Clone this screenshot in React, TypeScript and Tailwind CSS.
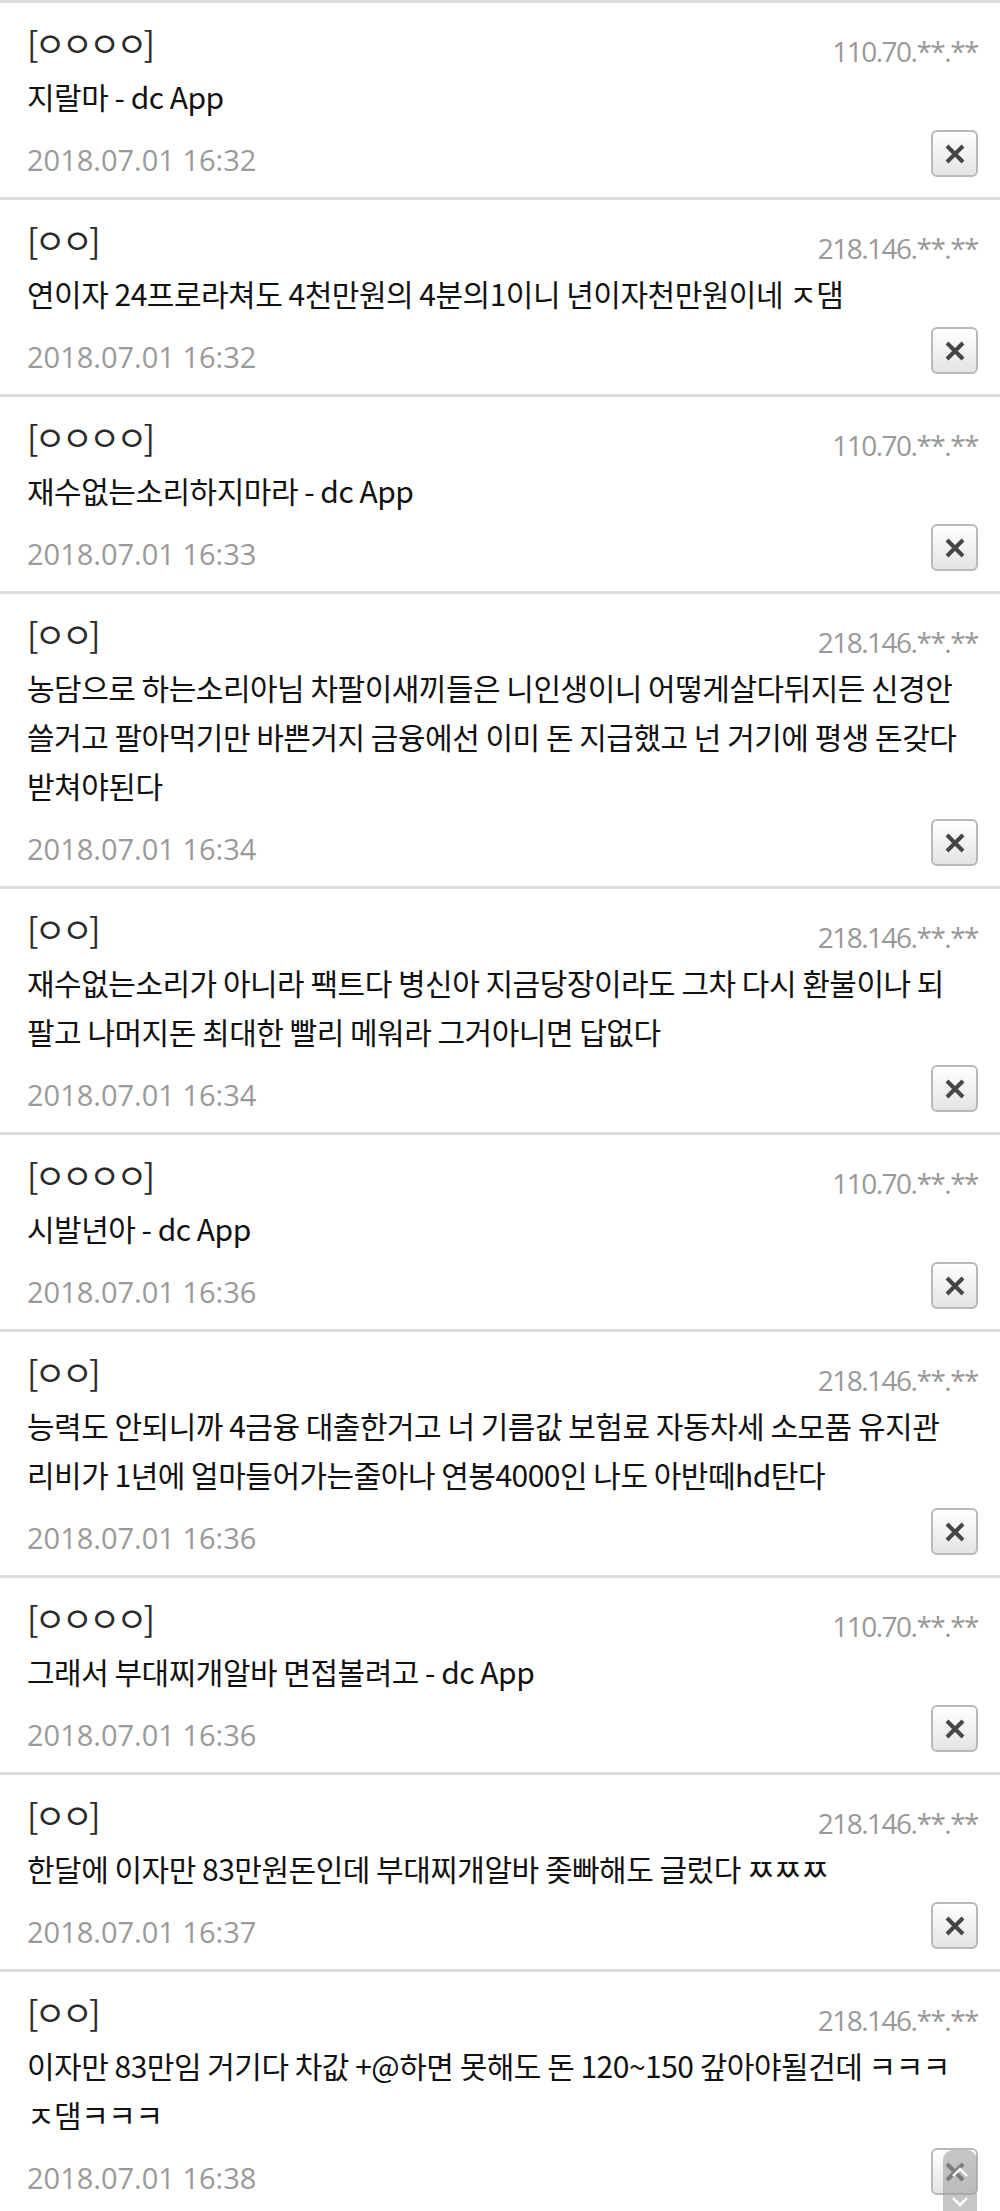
import React from 'react'

type Comment = {
  name: string
  ip: string
  lines: string[]
  date: string
}

const comments: Comment[] = [
  { name: '[ㅇㅇㅇㅇ]', ip: '110.70.**.**', lines: ['지랄마 - dc App'], date: '2018.07.01 16:32' },
  {
    name: '[ㅇㅇ]',
    ip: '218.146.**.**',
    lines: ['연이자 24프로라쳐도 4천만원의 4분의1이니 년이자천만원이네 ㅈ댐'],
    date: '2018.07.01 16:32',
  },
  { name: '[ㅇㅇㅇㅇ]', ip: '110.70.**.**', lines: ['재수없는소리하지마라 - dc App'], date: '2018.07.01 16:33' },
  {
    name: '[ㅇㅇ]',
    ip: '218.146.**.**',
    lines: [
      '농담으로 하는소리아님 차팔이새끼들은 니인생이니 어떻게살다뒤지든 신경안',
      '쓸거고 팔아먹기만 바쁜거지 금융에선 이미 돈 지급했고 넌 거기에 평생 돈갖다',
      '받쳐야된다',
    ],
    date: '2018.07.01 16:34',
  },
  {
    name: '[ㅇㅇ]',
    ip: '218.146.**.**',
    lines: [
      '재수없는소리가 아니라 팩트다 병신아 지금당장이라도 그차 다시 환불이나 되',
      '팔고 나머지돈 최대한 빨리 메워라 그거아니면 답없다',
    ],
    date: '2018.07.01 16:34',
  },
  { name: '[ㅇㅇㅇㅇ]', ip: '110.70.**.**', lines: ['시발년아 - dc App'], date: '2018.07.01 16:36' },
  {
    name: '[ㅇㅇ]',
    ip: '218.146.**.**',
    lines: [
      '능력도 안되니까 4금융 대출한거고 너 기름값 보험료 자동차세 소모품 유지관',
      '리비가 1년에 얼마들어가는줄아나 연봉4000인 나도 아반떼hd탄다',
    ],
    date: '2018.07.01 16:36',
  },
  { name: '[ㅇㅇㅇㅇ]', ip: '110.70.**.**', lines: ['그래서 부대찌개알바 면접볼려고 - dc App'], date: '2018.07.01 16:36' },
  {
    name: '[ㅇㅇ]',
    ip: '218.146.**.**',
    lines: ['한달에 이자만 83만원돈인데 부대찌개알바 좆빠해도 글렀다 ㅉㅉㅉ'],
    date: '2018.07.01 16:37',
  },
  {
    name: '[ㅇㅇ]',
    ip: '218.146.**.**',
    lines: ['이자만 83만임 거기다 차값 +@하면 못해도 돈 120~150 갚아야될건데 ㅋㅋㅋ', 'ㅈ댐ㅋㅋㅋ'],
    date: '2018.07.01 16:38',
  },
]

const kr = { fontFamily: '"Noto Sans CJK KR", "Noto Sans", sans-serif' }
const latin = { fontFamily: '"Open Sans", "Noto Sans CJK KR", sans-serif' }

function DeleteButton() {
  return (
    <button className="flex h-[47px] w-[47px] shrink-0 items-center justify-center rounded-[6px] border-2 border-[#b9b9b9] bg-gradient-to-b from-white to-[#e4e4e4]">
      <svg width="22" height="22" viewBox="0 0 22 22">
        <path d="M3 3 L19 19 M19 3 L3 19" stroke="#464646" strokeWidth="4" />
      </svg>
    </button>
  )
}

function CommentItem({ c }: { c: Comment }) {
  return (
    <div className="border-t-[3px] border-[#dcdcdc] pl-[27px] pr-[22px] pt-[20px] pb-[20px]">
      <div className="flex h-[40px] items-start justify-between">
        <span className="text-[34px] leading-[40px] tracking-[-4px] text-[#2b2b2b]" style={kr}>
          {c.name}
        </span>
        <span className="mt-[8px] text-[28px] leading-[40px] tracking-[-1.5px] text-[#999]" style={latin}>
          {c.ip}
        </span>
      </div>
      <div className="mt-[9px] text-[30px] leading-[49px] tracking-[-0.5px] text-[#111]" style={kr}>
        {c.lines.map((l, i) => (
          <div key={i} className="whitespace-nowrap">
            {l}
          </div>
        ))}
      </div>
      <div className="mt-[9px] flex items-start justify-between">
        <span className="mt-[15px] text-[29px] leading-[30px] text-[#9a9a9a]" style={latin}>
          {c.date}
        </span>
        <DeleteButton />
      </div>
    </div>
  )
}

export default function App() {
  return (
    <div className="relative h-[2211px] w-[1000px] overflow-hidden bg-white">
      {comments.map((c, i) => (
        <CommentItem key={i} c={c} />
      ))}

      {/* floating scroll buttons */}
      <div className="absolute left-[943px] top-[2150px] flex h-[90px] w-[34px] flex-col items-center rounded-t-[10px] bg-[#a0a0a0]/60 pt-[16px]">
        <svg width="18" height="12" viewBox="0 0 18 12">
          <path d="M2 10 L9 3 L16 10" stroke="#ffffff" strokeWidth="2.4" fill="none" />
        </svg>
        <svg className="mt-[18px]" width="18" height="12" viewBox="0 0 18 12">
          <path d="M2 2 L9 9 L16 2" stroke="#ffffff" strokeWidth="2.4" fill="none" />
        </svg>
      </div>
    </div>
  )
}
